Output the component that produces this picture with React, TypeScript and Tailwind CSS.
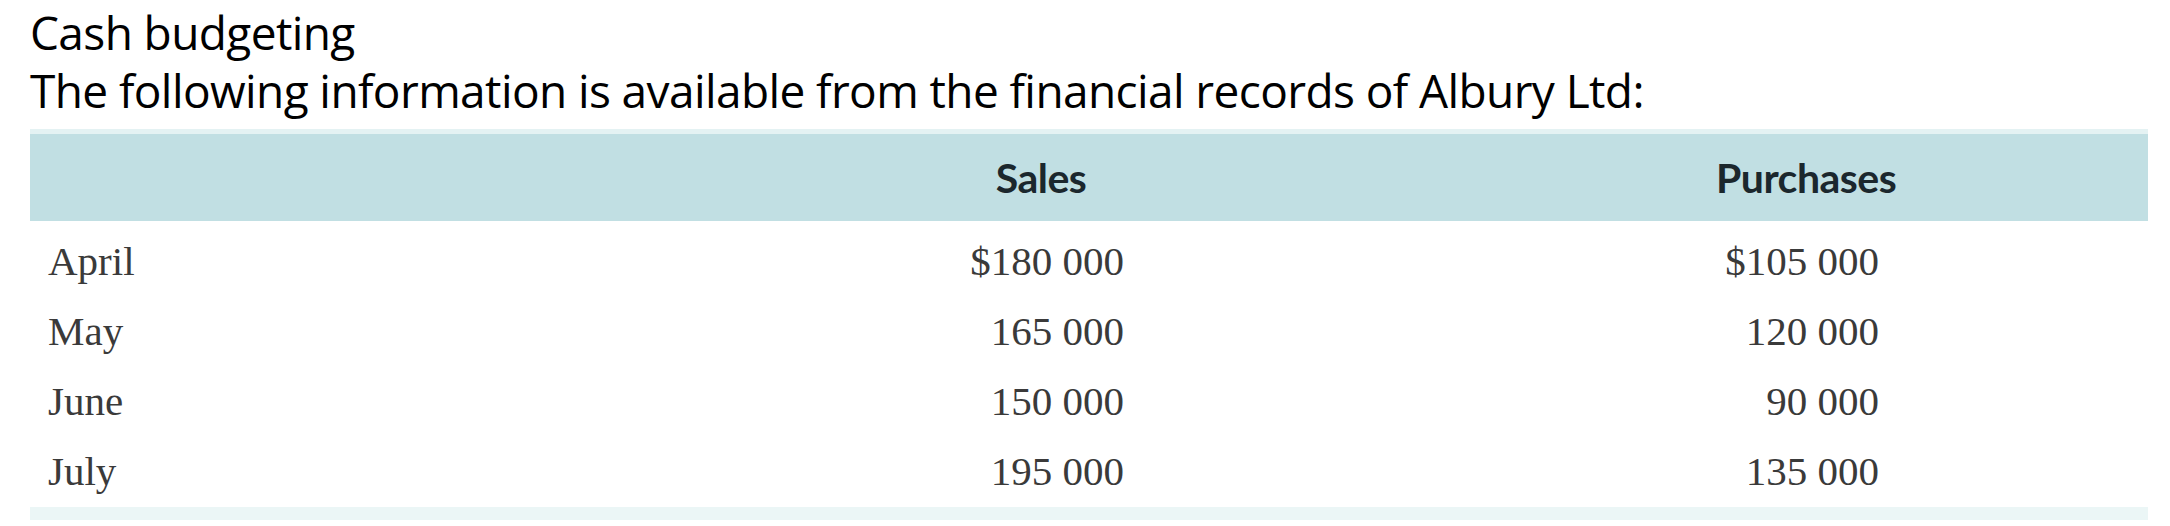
const rows = [
  { month: "April", sales: "$180 000", purchases: "$105 000" },
  { month: "May", sales: "165 000", purchases: "120 000" },
  { month: "June", sales: "150 000", purchases: "90 000" },
  { month: "July", sales: "195 000", purchases: "135 000" },
];

export default function App() {
  return (
    <div className="w-[2170px] h-[526px] bg-white pl-[30px] pr-[22px] overflow-hidden">
      <div className="pt-[3px] font-['Open_Sans',sans-serif] text-[46px] leading-[58px] text-black tracking-[-0.6px]">
        <p>Cash budgeting</p>
        <p>The following information is available from the financial records of Albury Ltd:</p>
      </div>

      <div className="mt-[10px] border-t-[5px] border-[#e4f2f3] border-b-[13px] border-b-[#ebf6f6]">
        {/* header band */}
        <div className="grid grid-cols-[928px_166px_592px_163px_1fr] h-[87px] items-center bg-[#c1dfe3] font-['Lato',sans-serif] font-bold text-[41px] tracking-[-0.5px] text-[#1b272d]">
          <div />
          <div className="text-center">Sales</div>
          <div />
          <div className="text-center">Purchases</div>
          <div />
        </div>

        {/* body rows */}
        <div className="pt-[6px] font-['Liberation_Serif',serif] text-[41px] text-[#3a3a3a]">
          {rows.map((r) => (
            <div key={r.month} className="grid grid-cols-[928px_166px_592px_163px_1fr] h-[70px] items-center">
              <div className="pl-[18px]">{r.month}</div>
              <div className="text-right">{r.sales}</div>
              <div />
              <div className="text-right">{r.purchases}</div>
              <div />
            </div>
          ))}
        </div>
      </div>
    </div>
  );
}
